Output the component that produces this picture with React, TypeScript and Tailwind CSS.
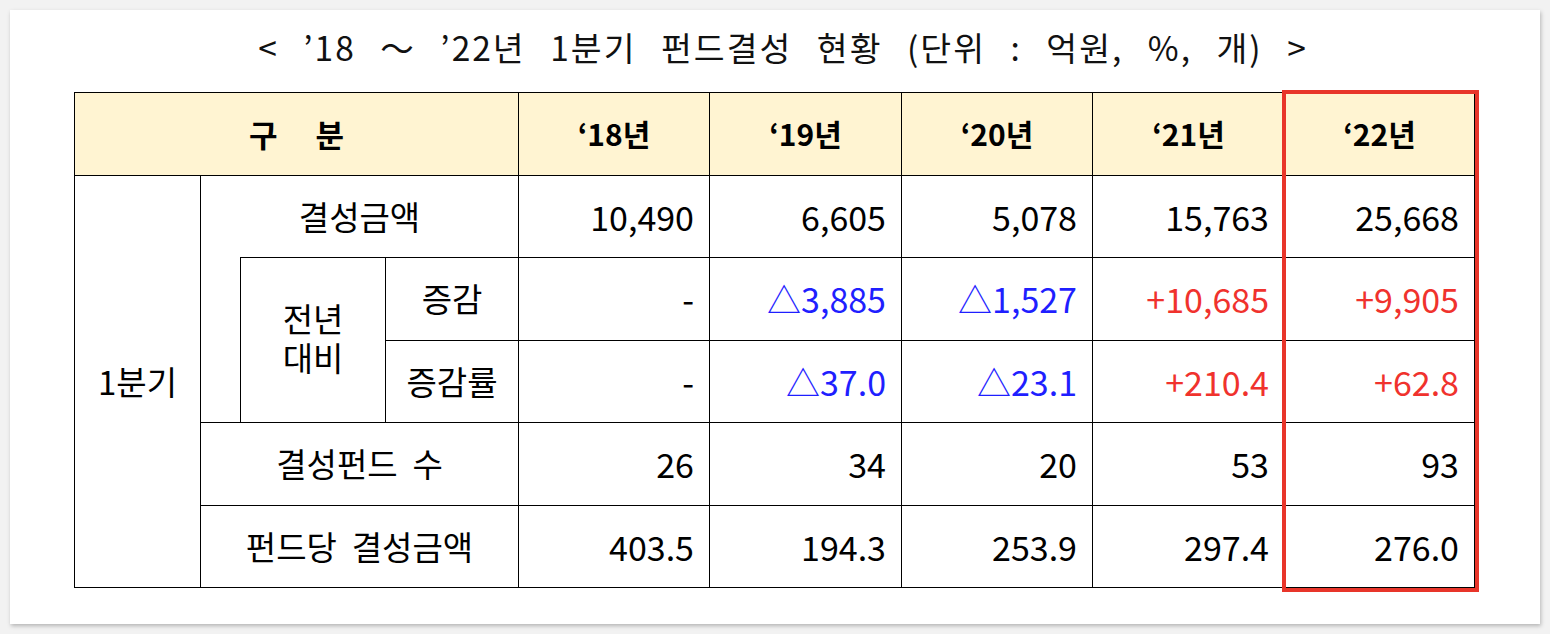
const years = ["‘18년", "‘19년", "‘20년", "‘21년", "‘22년"];

const amount = ["10,490", "6,605", "5,078", "15,763", "25,668"];
const diff = [
  { v: "-", c: "text-black" },
  { v: "△3,885", c: "text-[#1f1fff]" },
  { v: "△1,527", c: "text-[#1f1fff]" },
  { v: "+10,685", c: "text-[#f0322d]" },
  { v: "+9,905", c: "text-[#f0322d]" },
];
const rate = [
  { v: "-", c: "text-black" },
  { v: "△37.0", c: "text-[#1f1fff]" },
  { v: "△23.1", c: "text-[#1f1fff]" },
  { v: "+210.4", c: "text-[#f0322d]" },
  { v: "+62.8", c: "text-[#f0322d]" },
];
const funds = ["26", "34", "20", "53", "93"];
const perFund = ["403.5", "194.3", "253.9", "297.4", "276.0"];

const cell = "border border-black h-[82.5px] p-0";
const num = "border border-black h-[82.5px] pr-[15px] text-right text-[34px]";

export default function App() {
  return (
    <div className="w-[1550px] h-[634px] bg-[#f2f2f2] pt-[10px] pl-[10px] font-['Noto_Sans_CJK_KR','Noto_Sans',sans-serif]">
      <div className="w-[1530px] h-[614px] bg-white shadow-[1px_2px_4px_rgba(0,0,0,0.25)] flex flex-col items-center">
        <h1 className="mt-[16px] h-[66px] pl-[16px] text-[33.5px] leading-[42px] tracking-[0.06em] [word-spacing:15px] text-[#111] whitespace-pre">
          {"< ’18 ～ ’22년 1분기 펀드결성 현황 (단위 : 억원, %, 개) >"}
        </h1>
        <div className="relative ml-[64px] self-start">
          <table className="border-collapse table-fixed w-[1400px] text-black text-[33px]">
            <colgroup>
              <col className="w-[126px]" />
              <col className="w-[40px]" />
              <col className="w-[145px]" />
              <col className="w-[133px]" />
              <col className="w-[191px]" />
              <col className="w-[192px]" />
              <col className="w-[191px]" />
              <col className="w-[192px]" />
              <col className="w-[190px]" />
            </colgroup>
            <thead>
              <tr className="bg-[#fff4d2]">
                <th colSpan={4} className={cell}>
                  <div className="flex justify-center gap-[38px] text-[31px] font-bold">
                    <span>구</span>
                    <span>분</span>
                  </div>
                </th>
                {years.map((y) => (
                  <th key={y} className={`${cell} text-[30px] font-bold`}>
                    {y}
                  </th>
                ))}
              </tr>
            </thead>
            <tbody>
              <tr>
                <td rowSpan={5} className={`${cell} text-center`}>
                  1분기
                </td>
                <td colSpan={3} className="border-x border-t border-b-0 border-black h-[82.5px] p-0 text-center">
                  결성금액
                </td>
                {amount.map((a, i) => (
                  <td key={i} className={num}>
                    {a}
                  </td>
                ))}
              </tr>
              <tr>
                <td rowSpan={2} className="border-l border-black p-0" />
                <td rowSpan={2} className={`${cell} text-center align-middle`}>
                  <div className="pb-[4px] flex flex-col items-center">
                    <span className="leading-[39px]">전년</span>
                    <span className="leading-[39px]">대비</span>
                  </div>
                </td>
                <td className={`${cell} text-center`}>증감</td>
                {diff.map((d, i) => (
                  <td key={i} className={`${num} ${d.c}`}>
                    {d.v}
                  </td>
                ))}
              </tr>
              <tr>
                <td className={`${cell} text-center`}>증감률</td>
                {rate.map((d, i) => (
                  <td key={i} className={`${num} ${d.c}`}>
                    {d.v}
                  </td>
                ))}
              </tr>
              <tr>
                <td colSpan={3} className={`${cell} text-center whitespace-pre`}>
                  {"결성펀드  수"}
                </td>
                {funds.map((a, i) => (
                  <td key={i} className={num}>
                    {a}
                  </td>
                ))}
              </tr>
              <tr>
                <td colSpan={3} className={`${cell} text-center whitespace-pre`}>
                  {"펀드당  결성금액"}
                </td>
                {perFund.map((a, i) => (
                  <td key={i} className={num}>
                    {a}
                  </td>
                ))}
              </tr>
            </tbody>
          </table>
          <div className="absolute left-[1208px] top-[-2px] w-[197px] h-[502px] border-[4px] border-[#e8352a]" />
        </div>
      </div>
    </div>
  );
}
